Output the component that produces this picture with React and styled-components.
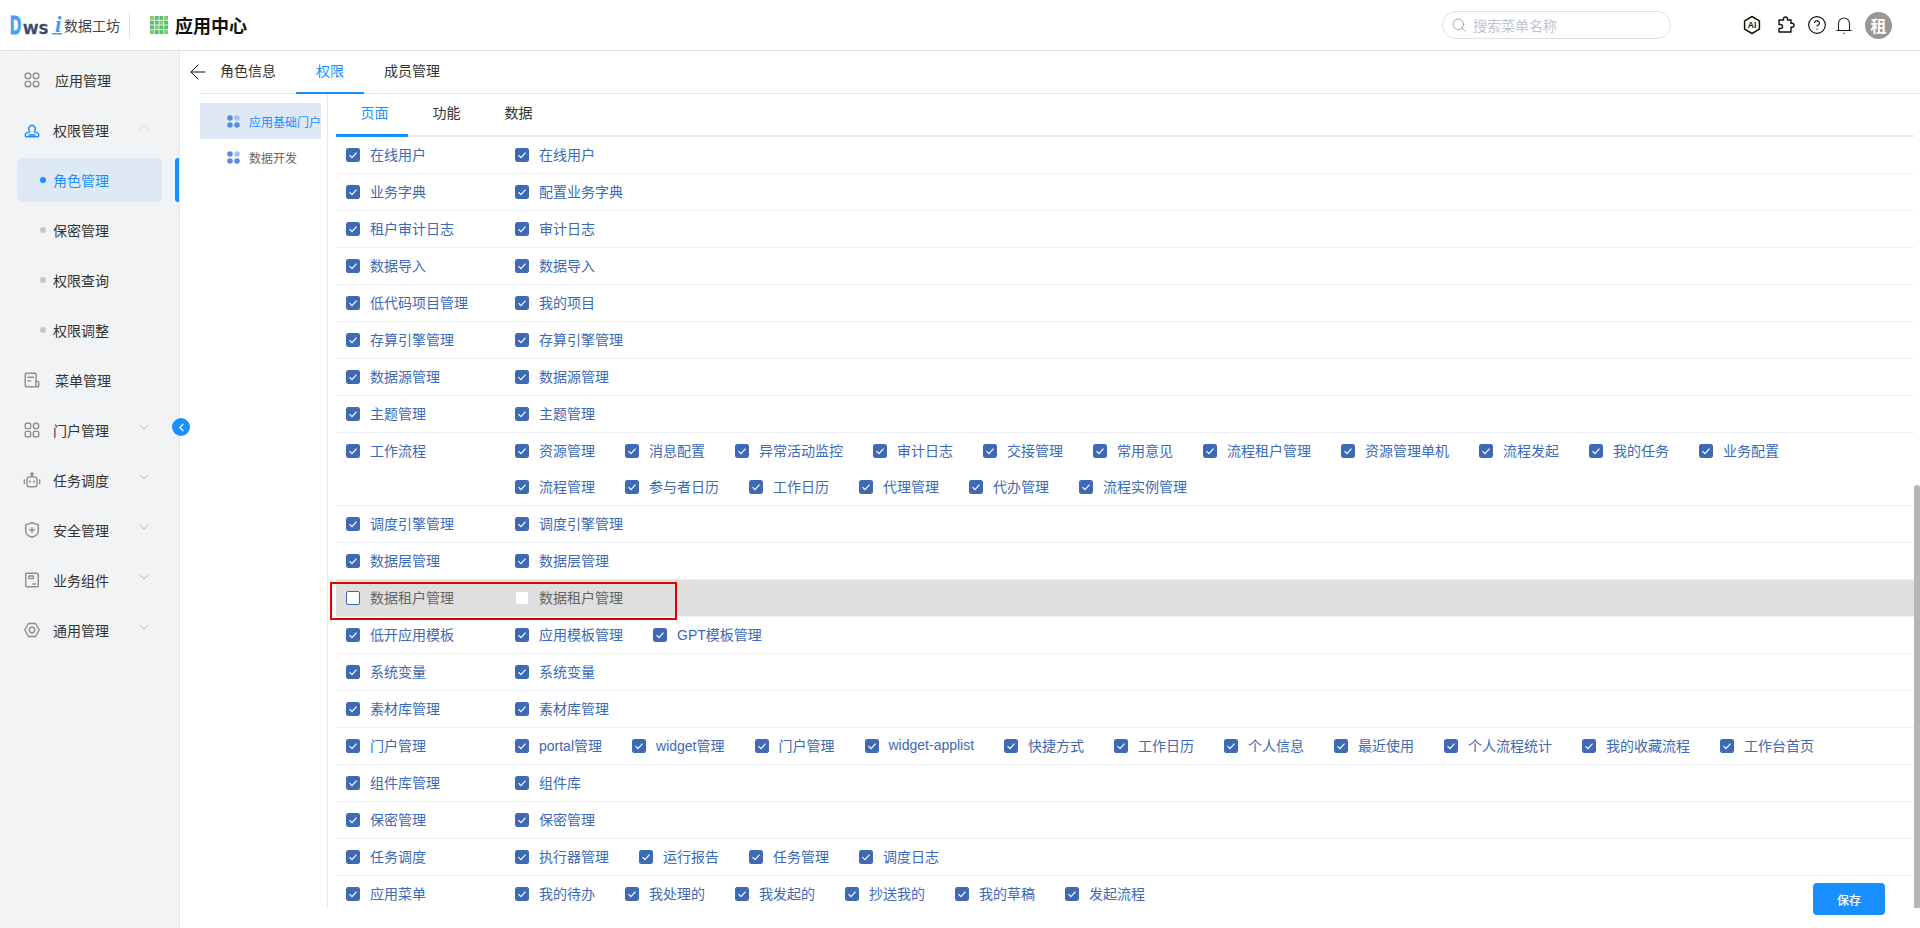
import React from 'react';
import styled, { createGlobalStyle } from 'styled-components';
import { ArrowLeft, ChevronDown, ChevronLeft, ChevronUp, CircleHelp, Search } from 'lucide-react';

const GlobalStyle = createGlobalStyle`
  html, body {
    margin: 0;
    padding: 0;
    height: 100%;
    overflow: hidden;
    background: #fff;
  }
  body {
    font-family: "Liberation Sans", "Noto Sans CJK SC", sans-serif;
    font-size: 14px;
    color: #333;
  }
  * {
    box-sizing: border-box;
  }
`;

const menu = [
  { label: '应用管理', icon: 'apps', plain: true },
  { label: '权限管理', icon: 'user', open: true },
  { label: '角色管理', child: true, active: true },
  { label: '保密管理', child: true },
  { label: '权限查询', child: true },
  { label: '权限调整', child: true },
  { label: '菜单管理', icon: 'doc', plain: true },
  { label: '门户管理', icon: 'portal', arrow: true },
  { label: '任务调度', icon: 'robot', arrow: true },
  { label: '安全管理', icon: 'shield', arrow: true },
  { label: '业务组件', icon: 'box', arrow: true },
  { label: '通用管理', icon: 'gear', arrow: true },
];

const rows = [
  ['在线用户', ['在线用户']],
  ['业务字典', ['配置业务字典']],
  ['租户审计日志', ['审计日志']],
  ['数据导入', ['数据导入']],
  ['低代码项目管理', ['我的项目']],
  ['存算引擎管理', ['存算引擎管理']],
  ['数据源管理', ['数据源管理']],
  ['主题管理', ['主题管理']],
  ['工作流程', ['资源管理', '消息配置', '异常活动监控', '审计日志', '交接管理', '常用意见', '流程租户管理', '资源管理单机', '流程发起', '我的任务', '业务配置', '流程管理', '参与者日历', '工作日历', '代理管理', '代办管理', '流程实例管理']],
  ['调度引擎管理', ['调度引擎管理']],
  ['数据层管理', ['数据层管理']],
  ['数据租户管理', ['数据租户管理'], true],
  ['低开应用模板', ['应用模板管理', 'GPT模板管理']],
  ['系统变量', ['系统变量']],
  ['素材库管理', ['素材库管理']],
  ['门户管理', ['portal管理', 'widget管理', '门户管理', 'widget-applist', '快捷方式', '工作日历', '个人信息', '最近使用', '个人流程统计', '我的收藏流程', '工作台首页']],
  ['组件库管理', ['组件库']],
  ['保密管理', ['保密管理']],
  ['任务调度', ['执行器管理', '运行报告', '任务管理', '调度日志']],
  ['应用菜单', ['我的待办', '我处理的', '我发起的', '抄送我的', '我的草稿', '发起流程']],
];

const MenuIcon = ({ name, color }) => {
  const shapes = {
    apps: (
      <>
        <rect x="2.5" y="2.5" width="6" height="6" rx="2.4" />
        <rect x="11.5" y="2.5" width="6" height="6" rx="2.4" />
        <rect x="2.5" y="11.5" width="6" height="6" rx="2.4" />
        <rect x="11.5" y="11.5" width="6" height="6" rx="2.4" />
      </>
    ),
    user: (
      <>
        <path d="M7 10.500a3.600 3.600 0 1 1 6 0c-.5.7-.5 1.600.3 1.900l2.500.8c1 .3 1.700 1.200 1.700 2.200v1.100c0 .6-.4 1-1 1H3.500c-.6 0-1-.4-1-1v-1.100c0-1 .7-1.900 1.700-2.200l2.500-.8c.8-.3.8-1.200.3-1.900z" />
        <path d="M6.500 15.500h7" />
      </>
    ),
    doc: (
      <>
        <path d="M14.500 17.500H3.500a1 1 0 0 1-1-1v-13a1 1 0 0 1 1-1h10a1 1 0 0 1 1 1v14z" />
        <path d="M5.500 7h6M5.500 11h3" />
        <path d="M14.500 11.500h2a1 1 0 0 1 1 1v4a1 1 0 0 1-1 1h-2" />
      </>
    ),
    portal: (
      <>
        <rect x="2.500" y="2.500" width="6" height="6" rx="1.500" />
        <circle cx="14.500" cy="5.500" r="3" />
        <rect x="2.500" y="11.500" width="6" height="6" rx="1.500" />
        <rect x="11.500" y="11.500" width="6" height="6" rx="1.500" />
      </>
    ),
    robot: (
      <>
        <rect x="4.500" y="6.500" width="11" height="11" rx="2.500" />
        <circle cx="10" cy="3.500" r="1.200" />
        <path d="M10 4.500v2M1.500 10v4M18.500 10v4" />
        <path d="M7.800 11v1.500M12.200 11v1.500" />
      </>
    ),
    shield: (
      <>
        <path d="M10 2l7 2.300v7.200c0 3.300-3 5.500-7 6.500-4-1-7-3.200-7-6.500V4.300z" />
        <path d="M10 7.500v5M7.500 10h5" />
      </>
    ),
    box: (
      <>
        <rect x="3" y="2.500" width="14" height="15" rx="1.500" />
        <path d="M6.500 5.500h5v3h-5zM11 14.500h3" />
      </>
    ),
    gear: (
      <>
        <path d="M6 2.800h8l4 7.200-4 7.200H6L2 10z" />
        <circle cx="10" cy="10" r="3" />
      </>
    ),
  };
  return (
    <svg width="18" height="18" viewBox="0 0 20 20" fill="none" stroke={color} strokeWidth="1.600" strokeLinejoin="round" strokeLinecap="round">
      {shapes[name]}
    </svg>
  );
};

const TreeIcon = () => (
  <svg width="13" height="13" viewBox="0 0 13 13">
    <circle cx="3" cy="3" r="2.800" fill="#5b8bdc" />
    <circle cx="10" cy="3" r="2.800" fill="#a3c1f0" />
    <circle cx="3" cy="10" r="2.800" fill="#5b8bdc" />
    <circle cx="10" cy="10" r="2.800" fill="#5b8bdc" />
  </svg>
);

const Logo = () => (
  <svg width="54" height="28" viewBox="0 0 54 28">
    <text transform="translate(0 23) scale(0.62 1)" fill="#4a9ff5" stroke="#4a9ff5" strokeWidth="1.200" fontFamily="Liberation Sans" fontWeight="700" fontSize="25">D</text>
    <text x="13" y="23" fill="#3d4a6b" stroke="#3d4a6b" strokeWidth="0.300" fontFamily="DejaVu Sans" fontWeight="700" fontSize="14">WS</text>
    <text x="45" y="21" fill="#3e9cf2" fontFamily="Liberation Serif" fontStyle="italic" fontWeight="700" fontSize="23">i</text>
    <rect x="42" y="22" width="10" height="1.500" fill="#3e9cf2" />
  </svg>
);

const GridLogo = () => (
  <svg width="18" height="18" viewBox="0 0 18 18">
    {[0, 1, 2, 3].map((r) =>
      [0, 1, 2, 3].map((c) => (
        <rect key={`${r}-${c}`} x={c * 4.700} y={r * 4.700} width="3.900" height="3.900" fill={(r + c) % 3 === 0 ? '#8cc95a' : '#4fbf78'} />
      ))
    )}
  </svg>
);

const AiIcon = () => (
  <svg width="20" height="20" viewBox="0 0 20 20" fill="none" stroke="#111" strokeWidth="1.500" strokeLinejoin="round">
    <path d="M10 1.500l7.400 4.300v8.400L10 18.500l-7.400-4.300V5.800z" />
    <text x="10" y="13" textAnchor="middle" fontFamily="Liberation Sans" fontSize="8.500" fontWeight="700" fill="#111" stroke="none">AI</text>
  </svg>
);

const PuzzleIcon = () => (
  <svg width="20" height="20" viewBox="0 0 20 20" fill="none" stroke="#111" strokeWidth="1.400" strokeLinejoin="round">
    <path d="M7.500 5V4a2 2 0 1 1 4 0v1H15v3.300h1a2 2 0 1 1 0 4h-1V17H3v-3.500h1.500a2 2 0 0 0 0-4H3V5z" />
  </svg>
);

const BellIcon = () => (
  <svg width="18" height="20" viewBox="0 0 18 20" fill="none" stroke="#222" strokeWidth="1.100">
    <path d="M3.500 15.500V8.500a5.500 5.500 0 0 1 11 0v7" />
    <path d="M1.500 15.500h15" />
    <path d="M9 17.700v1" strokeWidth="1.400" />
  </svg>
);

const Check = () => (
  <svg width="10" height="10" viewBox="0 0 10 10" fill="none" stroke="#fff" strokeWidth="1.200">
    <path d="M1.500 5.200l2.500 2.500 4.500-5" />
  </svg>
);

const Option = ({ label, muted, blank, off }) => (
  <Item>
    <Box $off={off} $blank={blank}>{!off && !blank && <Check />}</Box>
    <OptionText $muted={muted}>{label}</OptionText>
  </Item>
);

export default function App() {
  return (
    <Page>
      <GlobalStyle />
      <Header>
        <Brand>
          <Logo />
          <BrandName>数据工坊</BrandName>
        </Brand>
        <Divider />
        <GridLogo />
        <Title>应用中心</Title>
        <SearchBox>
          <Search size={16} strokeWidth={1.100} color="#888" />
          <span>搜索菜单名称</span>
        </SearchBox>
        <Tools>
          <AiIcon />
          <PuzzleIcon />
          <CircleHelp size={20} strokeWidth={1.400} color="#111" />
          <BellIcon />
        </Tools>
        <Avatar>租</Avatar>
      </Header>
      <Body>
        <Sidebar>
          {menu.map((m) => (
            <MenuRow key={m.label} $active={m.active}>
              {m.child ? <Dot $active={m.active} /> : <MenuIcon name={m.icon} color={m.open ? '#1890ff' : '#8f8f8f'} />}
              <MenuText $plain={m.plain} $active={m.active} $child={m.child}>{m.label}</MenuText>
              {m.open && <ChevronSlot><ChevronUp size={16} strokeWidth={1} color="#9cc5f2" /></ChevronSlot>}
              {m.arrow && <ChevronSlot><ChevronDown size={16} strokeWidth={1} color="#999" /></ChevronSlot>}
              {m.active && <ActiveBar />}
            </MenuRow>
          ))}
          <Collapse>
            <ChevronLeft size={13} strokeWidth={2} color="#fff" />
          </Collapse>
        </Sidebar>
        <Main>
          <TabBar>
            <BackIcon>
              <ArrowLeft size={24} strokeWidth={1} color="#111" />
            </BackIcon>
            <Tab>角色信息</Tab>
            <Tab $active>权限</Tab>
            <Tab>成员管理</Tab>
          </TabBar>
          <Content>
            <Tree>
              <TreeItem $active>
                <TreeIcon />
                应用基础门户
              </TreeItem>
              <TreeItem>
                <TreeIcon />
                数据开发
              </TreeItem>
            </Tree>
            <Panel>
              <SubTabs>
                <SubTab $active>页面</SubTab>
                <SubTab>功能</SubTab>
                <SubTab>数据</SubTab>
              </SubTabs>
              {rows.map(([name, items, off]) => (
                <Row key={name} $off={off}>
                  <FirstCell>
                    <Option label={name} off={off} muted={off} />
                  </FirstCell>
                  <Options>
                    {items.map((i) => (
                      <Option key={i} label={i} blank={off} muted={off} />
                    ))}
                  </Options>
                </Row>
              ))}
            </Panel>
          </Content>
          <Thumb />
          <Marker />
          <SaveButton>保存</SaveButton>
        </Main>
      </Body>
    </Page>
  );
}

const Page = styled.div`
  width: 1920px;
  height: 928px;
  display: flex;
  flex-direction: column;
  overflow: hidden;
`;

const Header = styled.header`
  height: 51px;
  flex: none;
  display: flex;
  align-items: center;
  padding-left: 10px;
  border-bottom: 1px solid #e0e0e0;
`;

const Brand = styled.div`
  display: flex;
  align-items: center;
  gap: 0;
`;

const BrandName = styled.span`
  font-size: 14px;
  color: #444;
`;

const Divider = styled.div`
  width: 1px;
  height: 24px;
  margin: 0 20px 0 9px;
  background: #ddd;
`;

const Title = styled.div`
  margin-left: 7px;
  font-size: 18px;
  font-weight: 700;
  color: #111;
`;

const SearchBox = styled.div`
  width: 229px;
  height: 28px;
  margin-left: auto;
  padding-left: 8px;
  display: flex;
  align-items: center;
  gap: 6px;
  border: 1px solid #dcdfe6;
  border-radius: 14px;
  color: #c0c4cc;
`;

const Tools = styled.div`
  display: flex;
  align-items: center;
  margin-left: 71px;
  & > svg:nth-child(2) {
    margin: 0 11px 0 14px;
  }
  & > svg:nth-child(4) {
    margin-left: 8px;
  }
`;

const Avatar = styled.div`
  width: 27px;
  height: 27px;
  margin-left: 12px;
  margin-right: 28px;
  border-radius: 50%;
  background: #9b9690;
  color: #fff;
  font-size: 16px;
  font-weight: 700;
  display: flex;
  align-items: center;
  justify-content: center;
`;

const Body = styled.div`
  flex: 1;
  display: flex;
  min-height: 0;
`;

const Sidebar = styled.aside`
  width: 180px;
  flex: none;
  position: relative;
  padding-top: 7px;
  background: #f2f3f5;
  border-right: 1px solid #e4e6ea;
`;

const MenuRow = styled.div`
  position: relative;
  height: 44px;
  margin: 0 17px 6px;
  padding-left: 6px;
  display: flex;
  align-items: center;
  border-radius: 6px;
  background: ${({ $active }) => ($active ? '#dfe9f5' : 'transparent')};
`;

const Dot = styled.span`
  width: 6px;
  height: 6px;
  margin-left: 17px;
  border-radius: 50%;
  background: ${({ $active }) => ($active ? '#1890ff' : '#c6c6c6')};
`;

const MenuText = styled.span`
  margin-left: ${({ $plain, $child }) => ($plain ? '14px' : $child ? '7px' : '12px')};
  color: ${({ $active }) => ($active ? '#1890ff' : '#333')};
`;

const ChevronSlot = styled.span`
  position: absolute;
  left: 119px;
  top: 11px;
  display: flex;
`;

const ActiveBar = styled.span`
  position: absolute;
  left: 158px;
  top: 0;
  width: 4px;
  height: 44px;
  border-radius: 3px 0 0 3px;
  background: #1890ff;
`;

const Collapse = styled.div`
  position: absolute;
  left: 172px;
  top: 367px;
  width: 18px;
  height: 18px;
  border-radius: 50%;
  background: #1890ff;
  display: flex;
  align-items: center;
  justify-content: center;
  z-index: 2;
`;

const Main = styled.main`
  flex: 1;
  position: relative;
  min-width: 0;
  padding-left: 20px;
`;

const TabBar = styled.div`
  position: relative;
  height: 43px;
  display: flex;
  border-bottom: 1px solid #e8e8e8;
`;

const BackIcon = styled.span`
  position: absolute;
  left: -14px;
  top: 9px;
  display: flex;
`;

const Tab = styled.div`
  height: 43px;
  padding: 0 20px;
  line-height: 40px;
  color: ${({ $active }) => ($active ? '#1890ff' : '#333')};
  border-bottom: 2px solid ${({ $active }) => ($active ? '#1890ff' : 'transparent')};
`;

const Content = styled.div`
  display: flex;
`;

const Tree = styled.div`
  width: 127px;
  flex: none;
  padding-top: 9px;
`;

const TreeItem = styled.div`
  width: 121px;
  height: 36px;
  padding-left: 27px;
  display: flex;
  align-items: center;
  gap: 9px;
  font-size: 12px;
  white-space: nowrap;
  color: ${({ $active }) => ($active ? '#1890ff' : '#666')};
  background: ${({ $active }) => ($active ? '#dfe9f5' : 'transparent')};
`;

const Panel = styled.div`
  flex: 1;
  min-width: 0;
  height: 814px;
  padding: 0 6px 0 8px;
  border-left: 1px solid #e8e8ec;
`;

const SubTabs = styled.div`
  height: 43px;
  display: flex;
  border-bottom: 2px solid #e8ecf0;
`;

const SubTab = styled.div`
  width: 72px;
  height: 43px;
  padding-left: 5px;
  line-height: 38px;
  text-align: center;
  color: ${({ $active }) => ($active ? '#1890ff' : '#333')};
  border-bottom: 3px solid ${({ $active }) => ($active ? '#1890ff' : 'transparent')};
`;

const Row = styled.div`
  display: flex;
  padding-left: 10px;
  background: ${({ $off }) => ($off ? '#dfdfdf' : 'transparent')};
  border-bottom: 1px solid #ecedf3;
  &:last-child {
    border-bottom: none;
  }
`;

const FirstCell = styled.div`
  width: 169px;
  flex: none;
`;

const Options = styled.div`
  flex: 1;
  min-width: 0;
  display: flex;
  flex-wrap: wrap;
`;

const Item = styled.label`
  height: 36px;
  margin-right: 30px;
  display: flex;
  align-items: center;
  gap: 10px;
  white-space: nowrap;
`;

const Box = styled.span`
  width: 14px;
  height: 14px;
  flex: none;
  display: flex;
  align-items: center;
  justify-content: center;
  border-radius: 2px;
  background: ${({ $off, $blank }) => ($off || $blank ? '#fff' : '#3d69b5')};
  border: 1px solid ${({ $blank }) => ($blank ? 'transparent' : '#3d69b5')};
  background-clip: padding-box;
`;

const OptionText = styled.span`
  padding-bottom: 2px;
  color: ${({ $muted }) => ($muted ? '#666' : '#3d69b5')};
`;

const Thumb = styled.div`
  position: absolute;
  right: 0;
  top: 434px;
  width: 6px;
  height: 423px;
  border-radius: 3px 3px 0 0;
  background: #b5b5ba;
`;

const Marker = styled.div`
  position: absolute;
  left: 150px;
  top: 531px;
  width: 347px;
  height: 38px;
  border: 2px solid #e60000;
`;

const SaveButton = styled.button`
  position: absolute;
  right: 35px;
  top: 832px;
  width: 72px;
  height: 32px;
  padding: 0;
  border: none;
  border-radius: 4px;
  background: #1890ff;
  color: #fff;
  font-family: inherit;
  font-size: 12px;
  font-weight: 500;
`;
